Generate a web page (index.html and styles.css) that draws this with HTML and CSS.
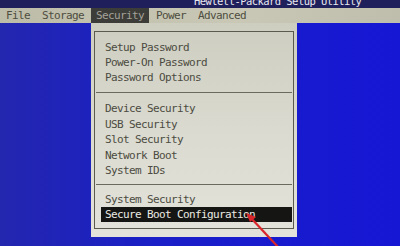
FILE: index.html
```html
<!DOCTYPE html>
<html>
<head>
<meta charset="utf-8">
<link rel="stylesheet" href="styles.css">
</head>
<body>
<div class="screen">
  <div class="titlebar"><div class="title">Hewlett-Packard Setup Utility</div></div>
  <div class="menubar">
    <span class="mi">File</span>
    <span class="mi">Storage</span>
    <span class="mi active">Security</span>
    <span class="mi">Power</span>
    <span class="mi">Advanced</span>
  </div>
  <div class="desk">
    <div class="panel">
      <div class="inner">
        <div class="group g1">
          <div class="row">Setup Password</div>
          <div class="row">Power-On Password</div>
          <div class="row">Password Options</div>
        </div>
        <div class="sep s1"></div>
        <div class="group g2">
          <div class="row">Device Security</div>
          <div class="row">USB Security</div>
          <div class="row">Slot Security</div>
          <div class="row">Network Boot</div>
          <div class="row">System IDs</div>
        </div>
        <div class="sep s2"></div>
        <div class="group g3">
          <div class="row">System Security</div>
          <div class="row sel">Secure Boot Configuration</div>
        </div>
      </div>
    </div>
  </div>
  <svg class="arrow" width="400" height="246" viewBox="0 0 400 246">
    <line x1="279" y1="248" x2="250" y2="217" stroke="#d9262b" stroke-width="2.2"/>
    <polygon points="246,213 256,217 250,222" fill="#d9262b"/>
  </svg>
</div>
</body>
</html>
```
FILE: styles.css
```css
html, body {
  margin: 0;
  padding: 0;
}
body {
  width: 400px;
  height: 246px;
  overflow: hidden;
  background: #1a1ec6;
}
.screen {
  position: relative;
  width: 400px;
  height: 246px;
  display: flex;
  flex-direction: column;
  font-family: "DejaVu Sans Mono", "Liberation Mono", monospace;
  font-size: 11px;
  letter-spacing: -0.62px;
}
.titlebar {
  height: 8px;
  background: #1f1f5c;
  overflow: hidden;
  flex: none;
}
.title {
  margin-top: -6px;
  line-height: 14px;
  padding-left: 194px;
  color: #e8e8f0;
  font-size: 10.5px;
  letter-spacing: -0.55px;
}
.menubar {
  height: 15px;
  flex: none;
  display: flex;
  align-items: stretch;
  gap: 2px;
  padding-left: 1px;
  background: linear-gradient(to right, #bdbca8, #c9c8b6 60%, #bfbeac);
}
.mi {
  padding: 0 5px;
  line-height: 15px;
  color: #4e4d40;
}
.mi.active {
  background: #3c3c38;
  color: #a3a298;
}
.desk {
  flex: 1;
  display: flex;
  align-items: flex-start;
  background: linear-gradient(to right, #2326ae, #1a1fc8 40%, #1517d4);
}
.panel {
  margin-left: 91px;
  width: 206px;
  box-sizing: border-box;
  height: 214px;
  padding: 8px 3px;
  background: linear-gradient(to bottom, #cdcdc0, #dadad0 50%, #e3e3db);
}
.inner {
  border: 1px solid #5a5a4e;
  height: 198px;
  box-sizing: border-box;
  padding: 8px 0 6px;
  display: flex;
  flex-direction: column;
}
.row {
  height: 15px;
  line-height: 15px;
  padding-left: 10px;
  color: #4c4b41;
  white-space: nowrap;
}
.g2 .row {
  height: 15.5px;
  line-height: 15.5px;
}
.row.sel {
  margin-left: 6px;
  margin-right: 1px;
  padding-left: 4px;
  background: #151513;
  color: #ebebe3;
}
.sep {
  height: 1px;
  background: #6a6a5e;
  margin: 0 1px;
}
.s1 {
  margin-top: 7px;
  margin-bottom: 8px;
}
.s2 {
  margin-top: 5.5px;
  margin-bottom: 7px;
}
.arrow {
  position: absolute;
  left: 0;
  top: 0;
  pointer-events: none;
}
```
